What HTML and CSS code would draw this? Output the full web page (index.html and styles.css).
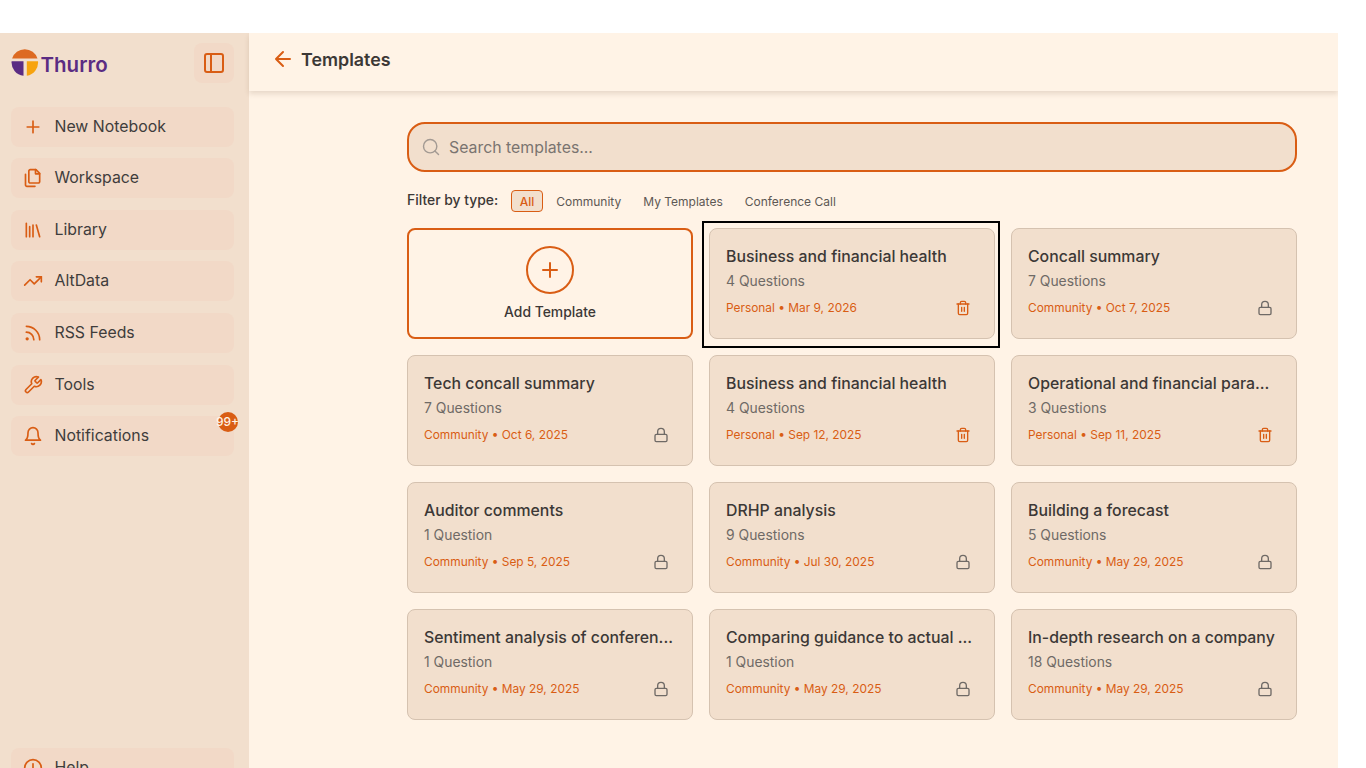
FILE: index.html
```html
<!DOCTYPE html>
<html lang="en">
<head>
<meta charset="utf-8">
<title>Templates</title>
<link rel="stylesheet" href="styles.css">
</head>
<body>
<svg class="defs" width="0" height="0" aria-hidden="true">
  <symbol id="i-plus" viewBox="0 0 24 24"><path d="M5 12h14M12 5v14"/></symbol>
  <symbol id="i-panel" viewBox="0 0 24 24"><rect x="3" y="3" width="18" height="18" rx="2"/><path d="M9 3v18"/></symbol>
  <symbol id="i-files" viewBox="0 0 24 24"><path d="M15.5 2H8.6c-.4 0-.8.2-1.1.5-.3.3-.5.7-.5 1.1v12.8c0 .4.2.8.5 1.1.3.3.7.5 1.1.5h9.8c.4 0 .8-.2 1.1-.5.3-.3.5-.7.5-1.1V6.5L15.5 2z"/><path d="M3 7.6v12.8c0 .4.2.8.5 1.1.3.3.7.5 1.1.5h9.8"/><path d="M15 2v5h5"/></symbol>
  <symbol id="i-library" viewBox="0 0 24 24"><path d="m16 6 4 14M12 6v14M8 8v12M4 4v16"/></symbol>
  <symbol id="i-trend" viewBox="0 0 24 24"><path d="M22 7 13.5 15.5l-5-5L2 17"/><path d="M16 7h6v6"/></symbol>
  <symbol id="i-rss" viewBox="0 0 24 24"><path d="M4 11a9 9 0 0 1 9 9"/><path d="M4 4a16 16 0 0 1 16 16"/><circle cx="5" cy="19" r="1"/></symbol>
  <symbol id="i-wrench" viewBox="0 0 24 24"><path d="M14.7 6.3a1 1 0 0 0 0 1.4l1.6 1.6a1 1 0 0 0 1.4 0l3.77-3.77a6 6 0 0 1-7.94 7.94l-6.91 6.91a2.12 2.12 0 0 1-3-3l6.91-6.91a6 6 0 0 1 7.94-7.94l-3.76 3.76z"/></symbol>
  <symbol id="i-bell" viewBox="0 0 24 24"><path d="M6 8a6 6 0 0 1 12 0c0 7 3 9 3 9H3s3-2 3-9"/><path d="M10.3 21a1.94 1.94 0 0 0 3.4 0"/></symbol>
  <symbol id="i-help" viewBox="0 0 24 24"><circle cx="12" cy="12" r="10"/><path d="M12 7v6"/></symbol>
  <symbol id="i-trash" viewBox="0 0 24 24"><path d="M3 6h18"/><path d="M19 6v14c0 1-1 2-2 2H7c-1 0-2-1-2-2V6"/><path d="M8 6V4c0-1 1-2 2-2h4c1 0 2 1 2 2v2"/><path d="M10 11v6M14 11v6"/></symbol>
  <symbol id="i-lock" viewBox="0 0 24 24"><rect x="3" y="11" width="18" height="11" rx="2"/><path d="M7 11V7a5 5 0 0 1 10 0v4"/></symbol>
</svg>

<div class="app">
  <aside class="sidebar">
    <div class="brand">
      <div class="logo">
        <svg class="logo-mark" viewBox="0 0 28 28" width="28" height="28" aria-hidden="true">
          <path d="M1.100 9.500A13.300 13.300 0 0 1 26.500 9.500Z" fill="#dd6a22"/>
          <path d="M.6 12.200H12.500V26.700A13.300 13.300 0 0 1 .6 12.200Z" fill="#5b2c83"/>
          <path d="M15.800 12.200H27A13.300 13.300 0 0 1 15.800 26.650Z" fill="#f7a30f"/>
        </svg>
        <span class="logo-text">Thurro</span>
      </div>
      <button class="collapse"><svg class="icon icon-panel"><use href="#i-panel"/></svg></button>
    </div>
    <nav class="nav">
      <a class="nav-item"><svg class="icon"><use href="#i-plus"/></svg><span>New Notebook</span></a>
      <a class="nav-item"><svg class="icon"><use href="#i-files"/></svg><span>Workspace</span></a>
      <a class="nav-item"><svg class="icon"><use href="#i-library"/></svg><span>Library</span></a>
      <a class="nav-item"><svg class="icon"><use href="#i-trend"/></svg><span>AltData</span></a>
      <a class="nav-item"><svg class="icon"><use href="#i-rss"/></svg><span>RSS Feeds</span></a>
      <a class="nav-item"><svg class="icon"><use href="#i-wrench"/></svg><span>Tools</span></a>
      <a class="nav-item has-badge"><svg class="icon"><use href="#i-bell"/></svg><span>Notifications</span><b class="badge">99+</b></a>
    </nav>
    <a class="nav-item help"><svg class="icon"><use href="#i-help"/></svg><span>Help</span></a>
  </aside>

  <main class="main">
    <header class="topbar">
      <svg class="back" viewBox="0 0 24 24"><path d="m12 19-7-7 7-7M19 12H5"/></svg>
      <h1>Templates</h1>
    </header>
    <div class="content">
      <div class="search">
        <svg class="search-icon" viewBox="0 0 24 24"><circle cx="11" cy="11" r="8"/><path d="m21 21-4.300-4.300"/></svg>
        <span>Search templates...</span>
      </div>
      <div class="filters">
        <span class="filter-label">Filter by type:</span>
        <span class="chip active">All</span>
        <span class="chip">Community</span>
        <span class="chip">My Templates</span>
        <span class="chip">Conference Call</span>
      </div>
      <div class="grid">
        <div class="add-card">
          <span class="add-circle"><svg class="icon icon-add"><use href="#i-plus"/></svg></span>
          <span class="add-label">Add Template</span>
        </div>

        <article class="card focused">
          <h2>Business and financial health</h2><p class="count">4 Questions</p>
          <div class="meta"><span>Personal • Mar 9, 2026</span><svg class="act trash"><use href="#i-trash"/></svg></div>
        </article>
        <article class="card">
          <h2>Concall summary</h2><p class="count">7 Questions</p>
          <div class="meta"><span>Community • Oct 7, 2025</span><svg class="act lock"><use href="#i-lock"/></svg></div>
        </article>

        <article class="card">
          <h2>Tech concall summary</h2><p class="count">7 Questions</p>
          <div class="meta"><span>Community • Oct 6, 2025</span><svg class="act lock"><use href="#i-lock"/></svg></div>
        </article>
        <article class="card">
          <h2>Business and financial health</h2><p class="count">4 Questions</p>
          <div class="meta"><span>Personal • Sep 12, 2025</span><svg class="act trash"><use href="#i-trash"/></svg></div>
        </article>
        <article class="card">
          <h2>Operational and financial para...</h2><p class="count">3 Questions</p>
          <div class="meta"><span>Personal • Sep 11, 2025</span><svg class="act trash"><use href="#i-trash"/></svg></div>
        </article>

        <article class="card">
          <h2>Auditor comments</h2><p class="count">1 Question</p>
          <div class="meta"><span>Community • Sep 5, 2025</span><svg class="act lock"><use href="#i-lock"/></svg></div>
        </article>
        <article class="card">
          <h2>DRHP analysis</h2><p class="count">9 Questions</p>
          <div class="meta"><span>Community • Jul 30, 2025</span><svg class="act lock"><use href="#i-lock"/></svg></div>
        </article>
        <article class="card">
          <h2>Building a forecast</h2><p class="count">5 Questions</p>
          <div class="meta"><span>Community • May 29, 2025</span><svg class="act lock"><use href="#i-lock"/></svg></div>
        </article>

        <article class="card">
          <h2>Sentiment analysis of conferen...</h2><p class="count">1 Question</p>
          <div class="meta"><span>Community • May 29, 2025</span><svg class="act lock"><use href="#i-lock"/></svg></div>
        </article>
        <article class="card">
          <h2>Comparing guidance to actual ...</h2><p class="count">1 Question</p>
          <div class="meta"><span>Community • May 29, 2025</span><svg class="act lock"><use href="#i-lock"/></svg></div>
        </article>
        <article class="card">
          <h2>In-depth research on a company</h2><p class="count">18 Questions</p>
          <div class="meta"><span>Community • May 29, 2025</span><svg class="act lock"><use href="#i-lock"/></svg></div>
        </article>
      </div>
    </div>
  </main>
</div>
</body>
</html>
```
FILE: styles.css
```css
* { box-sizing: border-box; }
html, body { margin: 0; height: 100%; overflow: hidden; background: #fff; }
body { font-family: Inter, "Liberation Sans", sans-serif; color: #3c3836; padding-top: 33px; }
.defs { position: absolute; }

.app { display: flex; width: 1338px; height: 735px; background: #fff3e6; overflow: hidden; }

.icon, .act, .back, .search-icon {
  fill: none; stroke: currentColor; stroke-width: 2; stroke-linecap: round; stroke-linejoin: round;
}

/* Sidebar */
.sidebar {
  width: 249px; flex: none; background: #f2dfcd; padding: 10px 15.500px 0 11px;
  display: flex; flex-direction: column; height: 735px; overflow: hidden;
}
.brand { display: flex; align-items: center; justify-content: space-between; height: 40px; margin-bottom: 23.600px; flex: none; }
.logo { display: flex; align-items: center; gap: 2px; margin-left: -.5px; }
.logo-mark { display: block; }
.logo-text { font-size: 20.500px; font-weight: 600; color: #5b2c83; line-height: 28px; margin-top: 3px; }
.collapse {
  width: 40px; height: 40px; border: 0; border-radius: 8px; background: #f2d9c7; color: #d95d14;
  display: flex; align-items: center; justify-content: center; padding: 0;
}
.icon { width: 20px; height: 20px; display: block; flex: none; color: #d95d14; }
.icon-panel { width: 24px; height: 24px; }
.icon-add { width: 24px; height: 24px; }
.nav { display: flex; flex-direction: column; gap: 11.600px; flex: none; }
.nav-item {
  display: flex; align-items: center; gap: 11.800px; height: 40px; padding: 0 11.700px; border-radius: 8px; flex: none;
  background: #f2d9c7; font-size: 15.850px; line-height: 24px; color: #3f3d3c; position: relative;
}
.help { margin-top: 291.800px; }
.badge {
  position: absolute; top: -4px; right: -4px; width: 20px; height: 20px; border-radius: 50%;
  background: #d95d14; color: #fff3e6; font-size: 12px; font-weight: 500; line-height: 20px; white-space: nowrap;
  display: flex; align-items: center; justify-content: center;
}

/* Main */
.main { flex: 1; min-width: 0; display: flex; flex-direction: column; }
.topbar {
  height: 58px; flex: none; display: flex; align-items: center; gap: 6px; padding: 0 0 6px 22px;
  box-shadow: 0 3px 5px rgba(90, 60, 30, .14);
}
.back { width: 24px; height: 24px; color: #d95d14; }
.topbar h1 { margin: 1px 0 0; font-size: 17.850px; font-weight: 600; line-height: 28px; color: #3c3836; }
.content { padding: 31px 41px 0 158px; }

.search {
  height: 50px; border: 2px solid #d95d14; border-radius: 18px; background: #f2dfcd;
  display: flex; align-items: center; gap: 8px; padding: 0 12px; font-size: 15.850px; color: #7a7470;
}
.search-icon { width: 20px; height: 20px; color: #a39a93; stroke-width: 1.7; }

.filters { display: flex; align-items: center; height: 22px; margin-top: 17px; font-size: 12px; color: #5d5854; }
.filter-label { font-size: 13.900px; font-weight: 500; color: #3c3836; margin-right: 13px; }
.chip { padding: 0 6px; margin: 1px 8px 0 0; height: 22px; line-height: 21px; border: 1px solid transparent; border-radius: 4px; }
.chip.active { color: #d95d14; background: #f2dfcd; border-color: #d95d14; font-weight: 500; padding: 0 8px 0 7.500px; margin-right: 6px; }

.grid { display: grid; grid-template-columns: repeat(3, 286px); grid-auto-rows: 111px; gap: 16px; margin-top: 17px; }
.card {
  position: relative; background: #f2dfcd; border: 1px solid #d5c2b0; border-radius: 8px;
  padding: 16px 16px 0; min-width: 0;
}
.card h2 {
  margin: 0; font-size: 15.850px; font-weight: 500; line-height: 24px; color: #3c3836;
  white-space: nowrap;
}
.count { margin: 2px 0 0; font-size: 13.900px; line-height: 20px; color: #6f6a66; }
.meta { display: flex; align-items: center; justify-content: space-between; margin-top: 7px; height: 19px; font-size: 11.900px; color: #d95d14; padding-right: 7.500px; }
.act { width: 16px; height: 16px; display: block; stroke-width: 2; margin-top: 1px; }
.trash { color: #d95d14; }
.lock { color: #6f6a66; }
.focused::after {
  content: ""; position: absolute; left: -8px; right: -6px; top: -8px; bottom: -10px;
  border: 2px solid #000; pointer-events: none;
}
.add-card {
  border: 2px solid #d95d14; border-radius: 8px; display: flex; flex-direction: column; align-items: center; padding-top: 16px;
}
.add-circle {
  width: 48px; height: 48px; border: 2px solid #d95d14; border-radius: 50%;
  display: flex; align-items: center; justify-content: center;
}
.add-label { margin-top: 8px; font-size: 13.900px; font-weight: 500; line-height: 20px; color: #3c3836; }
```
